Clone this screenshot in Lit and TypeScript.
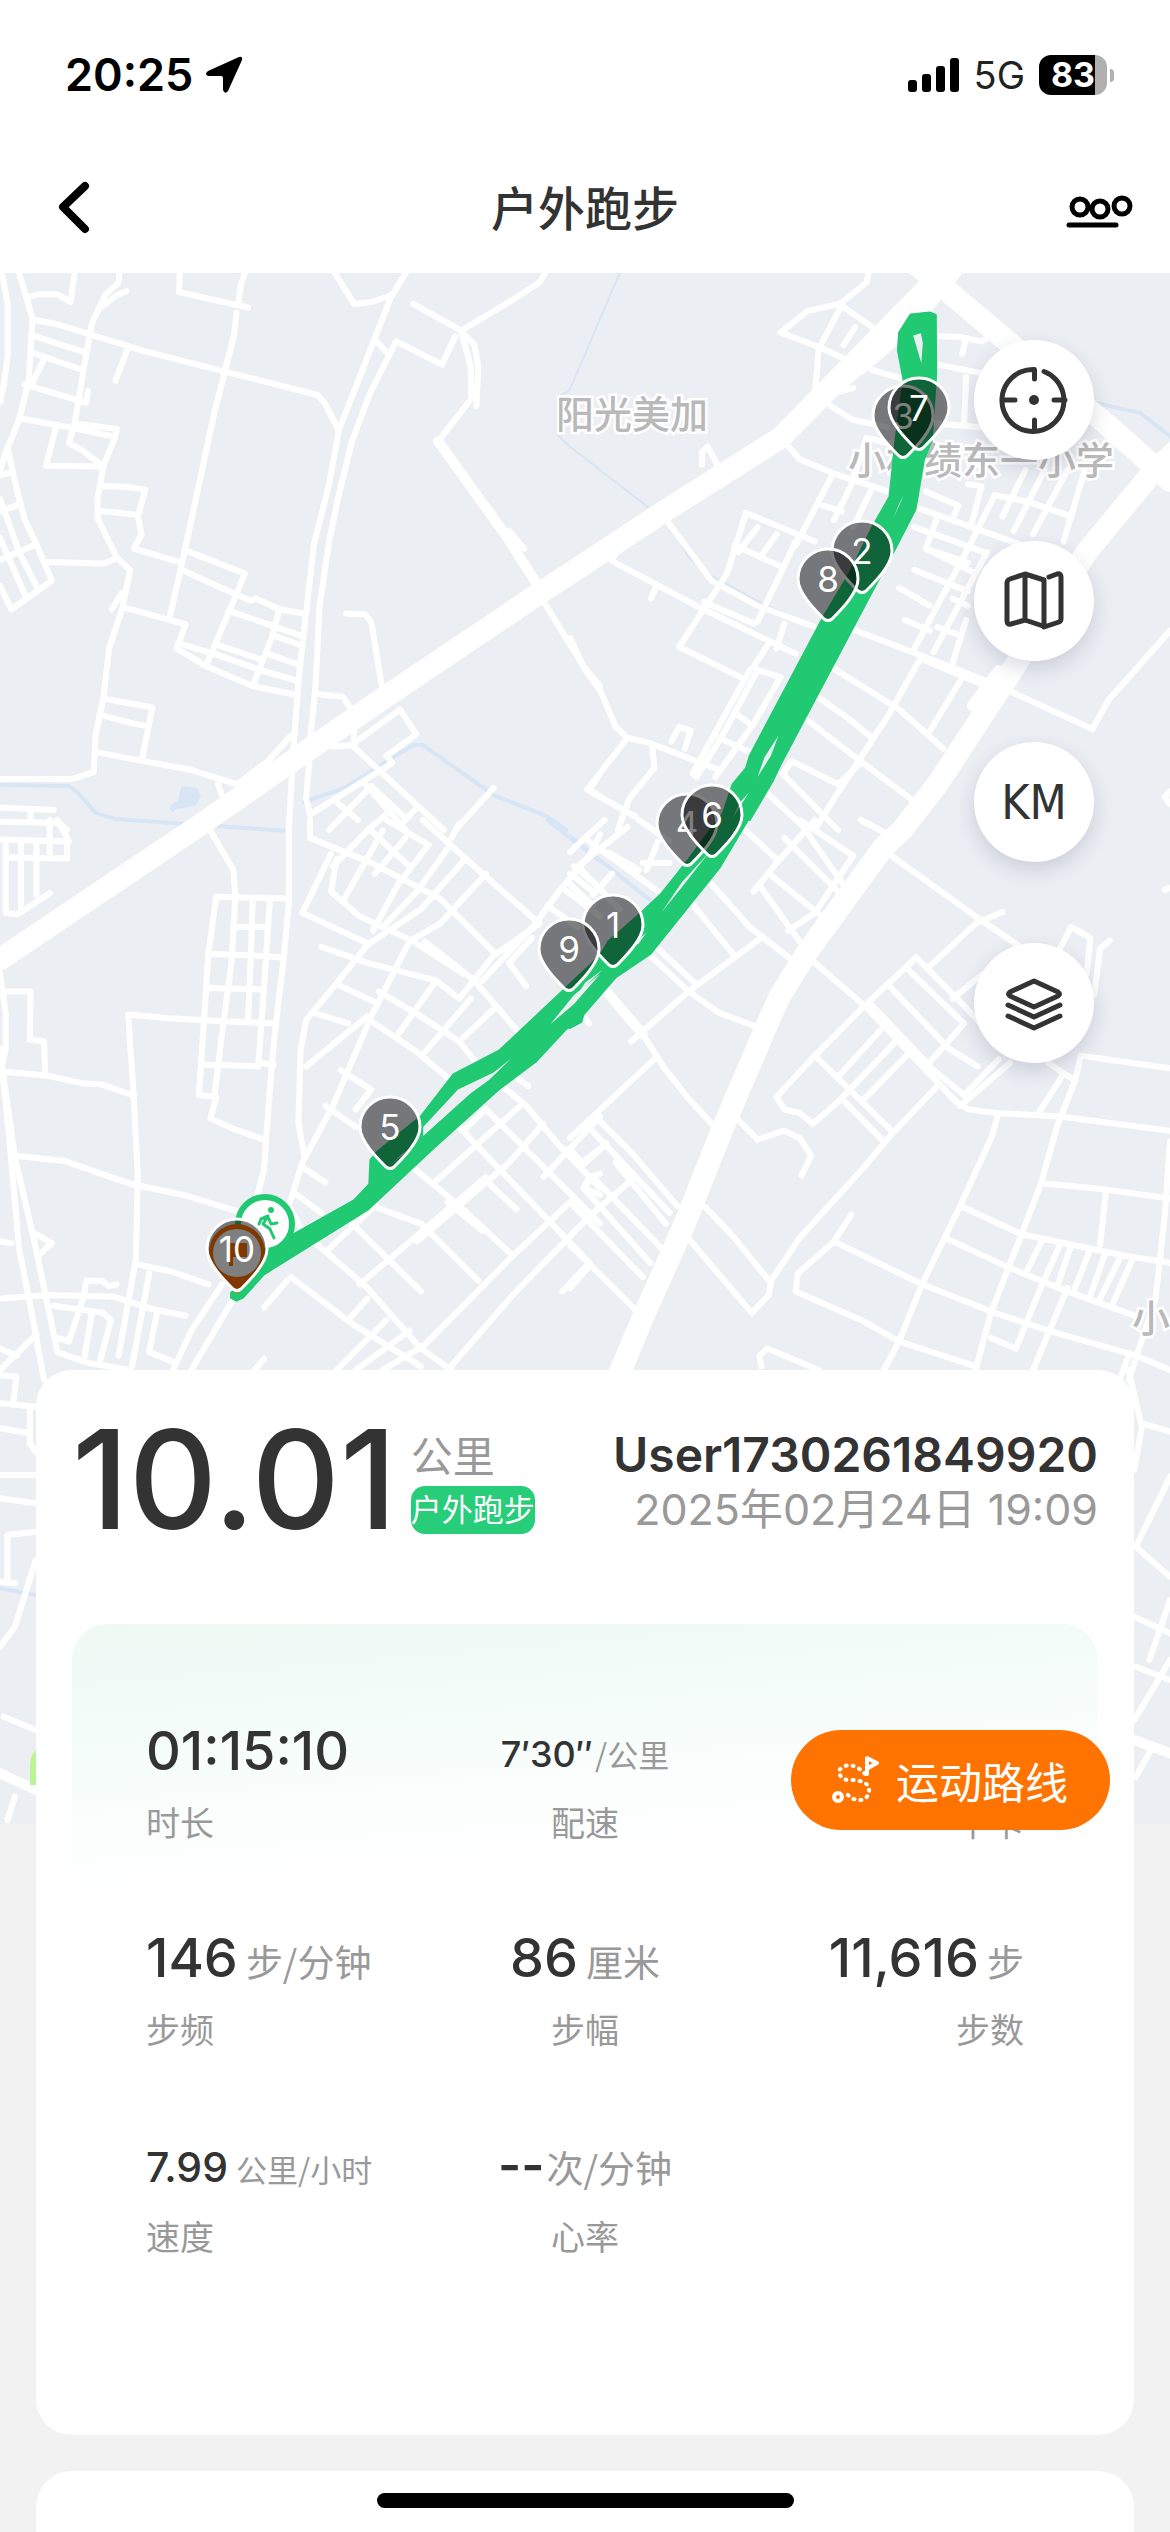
import { LitElement, html, svg, css } from "lit";
import { customElement, property } from "lit/decorators.js";

interface Tile { x: number; y: number; sx: number; sy: number }

// Map tiles: origin on the map canvas and units per pixel on each axis.
const A: Tile = { x: 0, y: 270, sx: 2.6133, sy: 2.8 };
const B: Tile = { x: 570, y: 270, sx: 2.6133, sy: 2.8 };
const C: Tile = { x: 0, y: 820, sx: 2.6133, sy: 2.8 };
const D: Tile = { x: 570, y: 820, sx: 2.6133, sy: 2.8 };
const E: Tile = { x: 0, y: 1360, sx: 1.34, sy: 3 };
const F: Tile = { x: 0, y: 1600, sx: 1.34, sy: 3 };

const project = (t: Tile, pts: string): string =>
  pts.trim().split(/\s+/).map((p) => {
    const [x, y] = p.split(",").map(Number);
    return `${(t.x + x / t.sx).toFixed(1)},${(t.y + y / t.sy).toFixed(1)}`;
  }).join(" ");

const lines = (t: Tile, data: string): string[] =>
  data.split(";").map((s) => s.trim()).filter(Boolean).map((s) => project(t, s));

const streets: string[] = [
  ...lines(A, `5,8 20,95 20,240 10,320 0,370; 50,8 85,135 75,310 50,420 15,510 0,560;
    75,75 100,68 150,68 185,90 195,8; 312,8 310,35 275,70 240,150 235,180 215,300 205,370 195,430 180,485 215,505 270,550;
    330,60 305,70 265,105; 90,140 150,152 235,180 370,225 590,285 830,350 850,375 885,450; 90,185 220,230; 80,230 215,280;
    115,250 85,315 65,320; 65,320 225,372 230,340; 335,215 302,310; 50,415 180,440 290,465;
    195,430 305,445 300,470 270,550 120,548 145,445;
    270,550 255,640 255,695 305,805 340,840 320,945 285,1060 270,1200 250,1300 245,1405 190,1425 0,1425;
    265,605 330,607 380,615 360,690 370,740 350,780 475,820; 260,675 355,685; 120,818 270,822 300,810; 318,905 292,950;
    470,8 468,62 648,105; 640,8 630,40 622,95; 618,120 612,180 560,400 480,800 445,965; 485,785 640,850 540,1105;
    475,840 600,900 655,925 670,920 730,950 795,962; 600,955 790,1025; 730,950 710,1030 660,1165; 720,1025 785,1050;
    700,1075 780,1105; 325,945 485,992 462,1060 540,1110 660,1165 775,1190; 465,1045 560,1075 680,1120 775,1150;
    565,1048 680,1090; 270,1200 398,1225 370,1375; 260,1245 350,1270 375,1275; 250,1350 400,1380 500,1400 620,1440 700,1375 760,1305;
    1060,8 1020,80 885,450 860,600 820,770 800,960 780,1150 765,1370 755,1568;
    875,8 925,95 970,90 1025,70; 985,200 1010,230;
    810,1320 825,1160 835,940 860,760 885,630 920,480 965,350 1035,200 1155,265 1190,185;
    1080,95 1205,170 1330,90 1410,35 1425,8; 1205,170 1240,210 1250,270 1245,380; 1205,170 1230,270 1232,360 1145,480;
    1330,730 1370,780; 905,962 955,965 970,985 1000,1180; 835,1188 895,1195 925,1240;
    1045,1230 1088,1300 1010,1360 1025,1380 810,1525 800,1480 808,1380; 870,1335 920,1330 990,1400 1160,1568;
    955,1440 1060,1568; 880,1490 935,1540; 860,1568 970,1445; 960,1568 1020,1515; 1290,1450 1190,1568; 1050,1550 1085,1510;
    1040,1235 925,1325 925,1280; 570,1440 580,1470; 1568,1410 1540,1455 1568,1475;
    0,1505 140,1512; 0,1545 155,1548 175,1568; 80,1510 80,1545;
    20,500 45,620 65,700 100,780 135,870 30,950 0,885; 0,575 35,565; 0,675 55,655; 0,640 50,790 100,895; 0,750 65,910; 0,812 95,768;
    1410,910 1525,1110 1568,1165; 975,1450 1055,1530`),
  ...lines(B, `780,8 775,35 705,95 620,115 550,175 650,215 730,255; 710,100 790,160 850,205; 710,100 650,220 640,350;
    745,160 715,210; 790,175 755,230; 955,185 1020,188 1075,200 1100,185; 1035,190 1025,235; 790,280 870,305;
    960,265 1130,300; 1035,300 1030,430; 955,430 1130,445; 560,480 600,530 690,570 830,620; 685,575 590,770; 745,580 690,700;
    680,380 740,420 830,440; 775,470 740,580; 775,470 850,490; 660,660 710,675; 790,610 740,720;
    245,690 370,870 490,940 640,1000; 700,990 920,1080 1110,1160 1365,1285 1410,1200 1440,1165 1568,1010;
    460,680 640,760; 460,680 410,850 285,1055 445,1140; 490,720 440,790; 540,740 500,800; 590,760 490,985; 430,770 550,830;
    350,930 480,990; 120,790 110,815 330,940 590,1075; 225,885 212,920; 345,545 345,510 360,495 385,545;
    0,1030 40,1120 80,1180 120,1280 150,1310 45,1455 170,1530; 150,1310 210,1325 390,1400; 215,1330 220,1395 155,1480 125,1568;
    265,1320 285,1280 315,1290 300,1340; 550,1140 490,1120 400,1300 330,1420; 550,1140 480,1270 380,1420; 430,1240 470,1270;
    390,1310 470,1350; 470,1120 320,1410; 520,1045 480,1110; 560,990 540,1060; 680,1110 740,1150 860,1230 975,1340;
    640,1190 720,1250 790,1310; 620,1260 740,1360 890,1480; 920,1080 830,1250 690,1480 640,1568; 920,1090 1100,1170; 1020,1150 935,1300;
    930,620 1015,660 1000,695; 905,665 1050,720 1180,770; 1040,600 1075,605 1050,710; 1110,630 1050,760 900,1060;
    1110,630 1200,650 1310,690; 1190,560 1130,690; 1240,560 1160,730; 1300,560 1210,740; 1345,560 1290,760; 960,690 930,780 1040,820;
    900,720 980,750 1080,790; 930,780 1060,850; 900,840 1040,900; 860,890 940,940; 875,980 940,1010; 1090,790 950,1070;
    1035,980 1000,1100; 555,1410 580,1375 700,1440 760,1380; 555,1410 700,1568; 500,1450 620,1568; 1568,1460 1555,1475 1568,1495;
    640,360 740,330; 960,1000 1010,1020; 1000,920 1040,940`),
  ...lines(C, `550,30 610,140 615,215; 755,0 755,230 740,400 720,580 710,690 695,900 690,980 670,1060;
    750,220 565,215 545,370 520,770 560,775 580,600 605,400 615,220; 610,300 700,300; 660,225 655,400 648,560; 705,225 690,470 675,690;
    545,375 640,378 740,385; 545,470 690,475; 720,570 560,562 440,555 335,545 350,780 360,1000 355,1230 310,1500; 530,685 675,690; 680,680 715,685;
    565,775 550,835 610,865 690,895; 0,430 15,540 15,640 5,690 40,950 90,1180 150,1490 230,1520 340,1540;
    0,640 25,900 50,1200 90,1420 115,1568; 10,480 80,480 78,615 115,620 118,705; 10,705 120,715 220,738 265,740 345,770;
    40,940 170,955 345,1020 480,1050 620,1095; 0,1180 30,1185; 95,1160 135,1185 105,1215; 0,1340 130,1330 300,1335 400,1370 485,1388;
    360,1245 450,1265 545,1300; 390,1270 345,1530; 305,1300 285,1305 265,1290 225,1290 220,1330 180,1460 150,1450;
    140,1360 270,1380 290,1400 260,1520; 240,1380 220,1510; 410,1380 390,1490 460,1520; 0,1540 95,1440; 0,1480 45,1500;
    580,1300 500,1430 440,1568; 605,1350 500,1540; 0,55 180,60 150,0; 15,65 15,260 45,265 130,205; 15,105 175,108 175,60;
    55,65 55,255; 95,65 95,210; 130,65 130,105; 130,0 130,60; 810,0 810,50 970,120 1150,220 1290,370;
    865,95 790,260 960,345; 1105,0 1240,130 1410,290; 1200,10 1180,50; 1010,0 1120,70 1040,180 975,310;
    880,110 865,200 940,270 1080,340 1210,430; 1000,30 900,220; 960,30 870,130; 1060,50 980,150; 970,30 1070,130;
    1270,150 1150,290 1070,340 970,550 870,800 790,960 755,1080 800,1170; 1215,110 1100,250 960,350 870,470 800,560 785,650 780,850 795,940;
    840,355 960,400 1140,450 1200,500 1290,380 1410,290; 1110,340 1240,450 1360,600; 880,460 980,510; 965,560 1090,650 1190,740;
    990,480 1100,550 1200,620; 820,540 910,570; 800,690 960,550; 1140,450 1040,600; 1230,500 1110,650; 1290,530 1210,610;
    1170,80 1090,200 1000,300; 1390,330 1330,400 1375,465; 1568,40 1540,100 1460,200 1400,290 1260,450; 1500,130 1568,190; 1470,190 1568,270;
    1430,240 1510,300; 1200,620 1260,700 1375,800 1460,910 1568,1030; 890,700 970,755 930,810; 850,800 930,860; 795,975 850,1015;
    770,1045 840,1100; 1070,965 1200,1080 1340,1220 1100,1480; 1380,745 1310,690; 1200,860 1540,1240 1470,1320; 1270,810 1568,1130;
    1360,800 1140,1010; 1420,850 1330,960 1090,1180; 1270,810 1210,870; 1270,1010 1350,1090; 1170,1070 1260,1150; 1490,1070 1340,1220;
    1270,1000 940,1300; 980,1080 860,1200; 970,1080 1100,1130 1250,1290; 920,1130 1100,1320; 820,1180 960,1310 1100,1480 1180,1540;
    760,1280 920,1410 1100,1530; 750,1290 690,1365; 960,1340 910,1400; 1010,1400 880,1540; 1070,1430 930,1540; 1110,1470 1000,1540; 690,1510 665,1540;
    1568,830 1420,1000; 1568,1050 1525,1030 1540,1000 1568,990; 1170,1540 1340,1330 1540,1110; 1460,910 1520,960 1568,920`),
  ...lines(D, `840,100 1060,270 1170,350; 1130,258 1060,290 940,410; 760,0 830,40; 450,20 540,110; 640,0 540,120 480,200; 600,0 740,100 640,260 570,310;
    520,150 670,280; 500,190 620,370; 610,20 720,190; 560,50 700,200; 370,180 470,300 590,400; 300,210 430,380;
    500,330 310,480 160,620; 180,350 310,480 390,540 490,580; 210,340 330,460; 190,600 250,700 310,780 370,850;
    440,840 490,895 560,870 600,890 630,940 605,995; 220,670 0,890; 65,830 160,930 280,1080; 45,855 260,1100;
    95,905 35,965 0,920; 0,1070 190,1280; 60,1000 35,1030 210,1240; 60,1000 240,1200; 170,1000 50,1110; 120,960 250,1130;
    0,1190 170,1370; 50,1250 0,1310; 355,1085 430,1170 520,1290; 300,1160 475,1380 520,1330 525,1290 600,1170 770,970 840,880 960,745;
    640,400 770,520 1010,790 1040,810 1110,820 1280,830 1568,870; 905,385 770,520 640,660 540,775 560,810 600,820 635,850 700,790 860,610;
    905,385 1030,520 1090,590; 830,460 990,640 1065,690; 880,415 1030,570 930,690; 790,520 950,700 1030,770; 640,660 840,870;
    710,780 820,900; 700,720 810,590; 770,780 880,660; 1000,500 1080,430; 1280,360 1310,300 1360,330 1350,430; 1410,338 1385,360 1370,490;
    1150,680 1020,800; 1120,670 1030,770; 1250,680 1320,730 1335,660 1568,695; 1320,730 1275,850 1230,1020 1180,1160 1100,1380 1060,1540; 1290,710 1225,820;
    1118,825 1105,880 1020,1080 920,1300 860,1460 820,1540; 1240,1018 1400,1035 1568,1060; 1400,1045 1385,1190;
    1020,1080 1180,1160 1450,1220 1568,1240; 980,1170 1140,1250 1300,1320 1480,1390; 690,1180 920,1300 1110,1380 1250,1430 1480,1500 1568,1540;
    735,1105 690,1180 595,1270 590,1320 770,1405 860,1460 1060,1530; 500,1530 495,1500 515,1480 650,1540; 1235,1175 1195,1260;
    1280,1190 1230,1310 1165,1480 1100,1450; 1310,1190 1275,1300; 1360,1200 1320,1310; 1400,1210 1360,1330; 1440,1220 1385,1340;
    1470,1230 1420,1350; 1568,900 1555,1100 1530,1340 1460,1568; 1300,1310 1210,1540; 1568,190 1555,195; 150,20 20,130; 90,0 0,90;
    50,60 230,200; 100,90 180,140; 0,150 60,200; 110,150 60,210; 230,60 200,140; 180,0 260,60; 20,130 130,250; 0,180 60,240; 30,540 50,570; 260,120 190,120`),
  ...lines(E, `0,45 22,50 18,125; 0,130 48,140; 40,150 40,250 48,275; 0,205 40,220; 0,345 48,345; 0,415 48,430; 10,660 10,525 48,515; 48,600 20,800 0,860; 0,665 20,670;
    1500,60 1512,-10; 1512,30 1530,200 1520,330; 1530,190 1568,215; 1568,350 1522,560 1568,650; 1520,770 1568,820; 1568,720 1540,900`),
  ...lines(F, `5,350 48,390; 10,660 20,590; 1568,240 1522,200; 1568,180 1520,360; 1545,440 1522,530`),
];

const avenues = [
  ...lines(A, "1145,480 1320,740 1410,890"),
  ...lines(B, "1010,8 900,150 640,385; 940,100 880,170 760,280; 1120,1120 1050,1220"),
  ...lines(D, "95,480 190,600"),
  ...lines(F, "0,520 48,570; 1520,420 1568,460"),
];

const highways = [
  project(C, "0,390 525,12") + " " + project(A, "770,1370 1000,1200 1410,905") + " " + project(B, "0,850 240,680 550,470 940,45 990,-10"),
  project(B, "900,-20 1160,215 1400,430 1568,590"),
  project(B, "1600,490 1520,570 1350,790 1150,1130 960,1440 868,1568") +
    " " + project(D, "820,75 620,370 550,490 520,560 400,860 300,1130 200,1370 125,1560"),
];

const streams = [
  ...lines(A, `0,1442 180,1445 205,1465 250,1520 300,1537 470,1550 740,1570; 795,1490 900,1450 1080,1330 1105,1330 1290,1470 1430,1530 1480,1568`),
  ...lines(B, "1365,370 1490,400 1568,465; 270,720 310,800 370,860 490,930 640,1005"),
  ...lines(C, "1430,0 1568,115"),
  ...lines(D, "0,45 210,225"),
  ...lines(E, "0,685 48,705"),
];
const creeks = lines(B, "130,8 0,335 -35,360 -35,460 0,495 205,665");

const routeEdge = [
  project(B, "890,125 940,119 956,126 957,290 945,480 925,530 903,670 850,780 790,900 550,1385 530,1430 470,1540"),
  project(D, "465,0 390,135 210,375 120,440 35,545 30,565 0,582"),
  project(C, "1525,545 1518,565 1480,585 1400,677 1300,757 1130,922 960,1092 690,1272 635,1337 618,1346 604,1338 604,1325 700,1200 925,1065 965,1020 968,952 985,930 1100,830 1185,712 1305,645 1568,380"),
  project(D, "100,340 185,260 240,205 310,110 400,-20"),
  project(B, "425,1440 460,1395 470,1360 660,975 730,850 790,720 835,635 850,480 872,310 857,225 860,175 890,125"),
].join(" ");

const routeGaps = [
  ...lines(B, "897,183 917,177 922,205 918,260; 872,632 860,655 845,695; 545,1303 525,1360 490,1420 508,1365; 468,1463 445,1500 425,1535 445,1490"),
  ...lines(C, "1106,860 1197,755 1290,707 1336,668 1278,728 1230,765 1106,885; 1568,432 1500,515 1438,572 1500,490; 1065,925 1050,935 1020,968"),
  ...lines(D, "362,92 300,178 240,258 292,175; 85,420 40,455 0,520 0,505; 200,315 180,345 140,375"),
];

// Kilometre pins in paint order, placed by their tips.
const pins = [
  { n: 1, x: 613, y: 967 }, { n: 2, x: 862, y: 593 }, { n: 3, x: 903, y: 458 },
  { n: 4, x: 687, y: 866 }, { n: 5, x: 390, y: 1169 }, { n: 6, x: 712, y: 857 },
  { n: 7, x: 919, y: 450 }, { n: 8, x: 828, y: 621 }, { n: 9, x: 569, y: 991 },
  { n: 10, x: 237, y: 1291 },
];
const pinShape = "M-4 -2C-13 -11 -30 -28 -30 -42A30 30 0 0 1 30 -42C30 -28 13 -11 4 -2Q0 1 -4 -2Z";

@customElement("route-map")
class RouteMap extends LitElement {
  static styles = css`
    :host { display: block; background: #ebeff4; }
    svg { display: block; width: 100%; }
    polyline { fill: none; stroke: #fff; stroke-linecap: round; stroke-linejoin: round; }
    .street { stroke-width: 6px; }
    .avenue { stroke-width: 10px; }
    .highway { stroke-width: 22px; }
    .stream { stroke: #d7e5f5; stroke-width: 4px; }
    .creek { stroke: #d7e5f5; stroke-width: 2px; }
    .pond { fill: #d7e5f5; }
    .park { fill: #b9f595; }
    .place { font: 500 38px "Noto Sans CJK SC", sans-serif; fill: #b9b9b9; stroke: #fff; stroke-width: 5px; paint-order: stroke; }
    .route { fill: #20c972; stroke: #20c972; stroke-width: 2px; stroke-linejoin: round; }
    .gap { fill: #ebeff4; }
    .pin { fill: rgba(0, 0, 0, 0.5); stroke: #fff; stroke-width: 3px; }
    .number { font: 400 35px Inter, sans-serif; fill: #fff; text-anchor: middle; }
    .start { fill: #fff; stroke: #20c972; stroke-width: 6px; }
    .runner { fill: none; stroke: #20c972; stroke-width: 3px; stroke-linecap: round; stroke-linejoin: round; }
    .runner-head { fill: #20c972; }
    .finish { fill: #ff7200; }
    .finish-disc { fill: #fff; }
  `;
  render() {
    const draw = (list: string[], cls: string) =>
      list.map((p) => svg`<polyline class=${cls} points=${p}></polyline>`);
    return html`
      <svg viewBox="0 273 1170 1551" role="img" aria-label="跑步路线地图">
        ${draw(creeks, "creek")} ${draw(streams, "stream")}
        <polygon class="pond" points=${project(A, "475,1445 515,1450 525,1475 510,1500 460,1510 452,1518 443,1510 450,1495 465,1485")}></polygon>
        ${draw(streets, "street")} ${draw(avenues, "avenue")} ${draw(highways, "highway")}
        <path class="park" d="M40 1748Q30 1752 30 1766V1785H40Z"></path>
        <text class="place" x="556" y="428">阳光美加</text>
        <text class="place" x="848" y="474">小村绩东一小学</text>
        <text class="place" x="1132" y="1332">小</text>
        <polygon class="route" points=${routeEdge}></polygon>
        ${routeGaps.map((p) => svg`<polygon class="gap" points=${p}></polygon>`)}
        <g transform="translate(265 1224)">
          <circle class="start" r="27"></circle>
          <circle class="runner-head" cx="6" cy="-14" r="3"></circle>
          <path class="runner" d="M-6 0L-4 -5L3 -8L-2 0L5 5L9 14M3 -7L6 0L12 -1"></path>
        </g>
        <g transform="translate(237 1294)">
          <path class="finish" d="M0 0C-10 -10 -28 -26 -28 -42A28 28 0 0 1 28 -42C28 -26 10 -10 0 0Z"></path>
          <circle class="finish-disc" cy="-41" r="24"></circle>
          <path class="finish" d="M-8 -51H10V-37H-4V-28H-8Z"></path>
        </g>
        ${pins.map((p) => svg`<g transform="translate(${p.x} ${p.y})">
          <path class="pin" d=${pinShape}></path>
          <text class="number" y="-29">${p.n}</text>
        </g>`)}
      </svg>`;
  }
}

@customElement("stat-item")
class StatItem extends LitElement {
  @property() value = "";
  @property() unit = "";
  @property() label = "";
  @property() size = "large";
  @property() align = "start";
  static styles = css`
    :host { display: block; white-space: nowrap; }
    .stat { display: flex; flex-direction: column; gap: 17px; margin: 0; }
    .start { align-items: flex-start; }
    .center { align-items: center; }
    .end { align-items: flex-end; }
    .row { display: flex; align-items: center; height: 60px; margin: 0; }
    .line { line-height: 60px; }
    .value { color: #333; font-weight: 500; }
    .unit { color: #999; font-family: "Noto Sans CJK SC", sans-serif; font-weight: 400; margin-left: 8px; }
    .large .value { font-size: 54px; }
    .large .unit, .dash .unit { font-size: 37px; }
    .medium .value { font-size: 41px; }
    .medium .unit { font-size: 31px; }
    .small .value { font-size: 36px; }
    .small .unit { font-size: 31px; }
    .small .unit, .dash .unit { margin-left: 2px; }
    .dash .value { font-size: 50px; font-weight: 600; }
    .label { color: #999; font-size: 34px; line-height: 40px; }
  `;
  render() {
    return html`<dl class="stat ${this.align}">
      <dd class="row ${this.size}"><span class="line"><span class="value">${this.value}</span>${this.unit ? html`<span class="unit">${this.unit}</span>` : ""}</span></dd>
      <dt class="label">${this.label}</dt>
    </dl>`;
  }
}

const stats = [
  { value: "01:15:10", unit: "", label: "时长", size: "large", align: "start" },
  { value: "7′30″", unit: "/公里", label: "配速", size: "small", align: "center" },
  { value: "", unit: "", label: "千卡", size: "large", align: "end" },
  { value: "146", unit: "步/分钟", label: "步频", size: "large", align: "start" },
  { value: "86", unit: "厘米", label: "步幅", size: "large", align: "center" },
  { value: "11,616", unit: "步", label: "步数", size: "large", align: "end" },
  { value: "7.99", unit: "公里/小时", label: "速度", size: "medium", align: "start" },
  { value: "--", unit: "次/分钟", label: "心率", size: "dash", align: "center" },
];

@customElement("app-root")
class AppRoot extends LitElement {
  static styles = css`
    :host { display: block; font-family: Inter, "Noto Sans CJK SC", sans-serif; color: #333; }
    * { box-sizing: border-box; }
    button { border: 0; padding: 0; margin: 0; background: none; font: inherit; color: inherit; cursor: pointer; }
    .page { position: relative; display: flex; flex-direction: column; min-height: 100vh; background: #f2f2f2; overflow: hidden; }
    .top { background: #fff; }
    .status { display: flex; align-items: center; justify-content: space-between; padding: 45px 56px 39px 65px; line-height: 60px; color: #000; }
    .status-side { display: flex; align-items: center; }
    .time { font-size: 45px; font-weight: 600; }
    .arrow { width: 38px; height: 38px; margin-left: 12px; }
    .signal { width: 52px; height: 36px; margin-right: 14px; }
    .network { font-size: 38px; margin-right: 14px; color: #222; }
    .battery { display: flex; align-items: center; gap: 3px; }
    .cell { display: grid; place-items: center; width: 68px; height: 40px; border-radius: 12px; background: linear-gradient(90deg, #000 83%, #b0b0b0 83%); color: #fff; font-size: 34px; font-weight: 700; line-height: 40px; }
    .nub { width: 4px; height: 13px; border-radius: 0 4px 4px 0; background: #b0b0b0; }
    .nav { display: grid; grid-template-columns: 1fr auto 1fr; align-items: center; height: 129px; padding: 0 34px; }
    .nav svg { display: block; }
    .back { width: 60px; height: 60px; padding-left: 20px; }
    .back svg { width: 40px; height: 60px; }
    .more { width: 72px; height: 40px; justify-self: end; }
    .title { margin: 0; font-size: 47px; line-height: 60px; font-weight: 500; }
    .map { position: relative; }
    .controls { position: absolute; top: 67px; right: 76px; display: flex; flex-direction: column; gap: 81px; }
    .control { display: grid; place-items: center; width: 120px; height: 120px; border-radius: 50%; background: #fff; box-shadow: 0 8px 20px rgba(40, 40, 70, 0.16); }
    .control svg { width: 72px; height: 72px; }
    .km { font-family: "DejaVu Sans Condensed", "DejaVu Sans", sans-serif; font-size: 48px; color: #333; }
    .card { position: relative; margin: 0 36px; background: #fff; border-radius: 36px; }
    .summary { margin-top: -454px; padding: 42px 36px 177px; }
    .head { display: flex; justify-content: space-between; align-items: center; }
    .distance { display: flex; align-items: center; gap: 14px; }
    .number { font-size: 137px; line-height: 134px; font-weight: 500; }
    .aside { display: flex; flex-direction: column; align-items: flex-start; padding-top: 6px; line-height: 54px; }
    .unit { font-size: 42px; color: #999; }
    .tag { margin-top: 2px; border-radius: 14px; background: #27cd79; color: #fff; font-size: 31px; line-height: 48px; }
    .who { align-items: flex-end; }
    .user { font-size: 48px; font-weight: 600; }
    .date { font-size: 43px; font-weight: 400; color: #999; }
    .panel { margin-top: 78px; padding: 103px 74px 0; border-radius: 36px 36px 0 0; background: linear-gradient(175deg, #eef9f4, #f4fcf9 120px, #fff 271px) no-repeat top / 100% 271px; }
    .stats { display: grid; grid-template-columns: repeat(3, minmax(0, 1fr)); row-gap: 90px; }
    .next { flex: 1; min-height: 61px; margin-top: 36px; border-radius: 36px 36px 0 0; }
    .route { position: absolute; right: 60px; bottom: 702px; display: flex; align-items: center; gap: 15px; height: 100px; padding: 0 42px 0 40px; border-radius: 50px; background: #ff7300; color: #fff; font-size: 43px; }
    .route svg { width: 50px; height: 52px; }
    .home { position: absolute; left: 0; right: 0; bottom: 24px; width: 417px; height: 15px; margin: 0 auto; border-radius: 8px; background: #000; }
    .ink { fill: none; stroke: #333; stroke-width: 5px; stroke-linecap: round; stroke-linejoin: round; }
    .dot { fill: #333; }
    .black { fill: none; stroke: #000; stroke-width: 5px; stroke-linecap: round; }
    .chevron { fill: none; stroke: #000; stroke-width: 8px; stroke-linecap: round; stroke-linejoin: round; }
    .light { fill: none; stroke: #fff; stroke-width: 4px; stroke-linecap: round; stroke-linejoin: round; }
    .dots { stroke-dasharray: 1 6; }
  `;
  render() {
    return html`
      <div class="page">
        <header class="top">
          <div class="status">
            <div class="status-side">
              <span class="time">20:25</span>
              <svg class="arrow" viewBox="0 0 38 38"><path d="M34 1L3 15Q-1 18 3 20H16Q18 20 18 22V34Q20 39 23 35L37 4Q38 0 34 1Z"/></svg>
            </div>
            <div class="status-side">
              <svg class="signal" viewBox="0 0 52 36"><rect y="23" width="9" height="12" rx="3"/><rect x="14" y="17" width="9" height="18" rx="3"/><rect x="28" y="9" width="9" height="26" rx="3"/><rect x="42" y="1" width="9" height="34" rx="3"/></svg>
              <span class="network">5G</span>
              <span class="battery"><span class="cell">83</span><span class="nub"></span></span>
            </div>
          </div>
          <nav class="nav">
            <button class="back" aria-label="返回"><svg viewBox="0 0 40 60"><path class="chevron" d="M31 7L9 28L31 50"/></svg></button>
            <h1 class="title">户外跑步</h1>
            <button class="more" aria-label="更多"><svg viewBox="0 0 72 40">
              <circle class="black" cx="16" cy="18" r="8"/><circle class="black" cx="36" cy="20" r="8"/><circle class="black" cx="58" cy="17" r="8"/><path class="black" d="M5 36H52"/>
            </svg></button>
          </nav>
        </header>
        <section class="map">
          <route-map></route-map>
          <div class="controls">
            <button class="control" aria-label="定位"><svg viewBox="0 0 72 72"><path class="ink" d="M46 7.500A31 31 0 1 1 36.500 5.500V15M36.500 67V56M5 36H17M67 36H56"/><circle class="dot" cx="36" cy="36" r="5"/></svg></button>
            <button class="control" aria-label="地图"><svg viewBox="0 0 72 72"><path class="ink" d="M45 61L27 55L13 59Q9 60 9 56V18Q9 15 12 14L27 9L46 15V62L61 57Q63 56 63 54V12Q63 8 59 9L51 12M27 9V55"/></svg></button>
            <button class="control km">KM</button>
            <button class="control" aria-label="图层"><svg viewBox="0 0 72 72"><path class="ink" d="M36 14L60 25Q63 27 60 29L36 40L12 29Q9 27 12 25ZM10 38L36 50L62 38M10 49L36 61L62 49"/></svg></button>
          </div>
        </section>
        <section class="card summary">
          <div class="head">
            <div class="distance">
              <span class="number">10.01</span>
              <div class="aside"><span class="unit">公里</span><span class="tag">户外跑步</span></div>
            </div>
            <div class="aside who"><span class="user">User1730261849920</span><time class="date">2025年02月24日 19:09</time></div>
          </div>
          <div class="panel"><div class="stats">
            ${stats.map((s) => html`<stat-item .value=${s.value} .unit=${s.unit} .label=${s.label} .size=${s.size} .align=${s.align}></stat-item>`)}
          </div></div>
        </section>
        <section class="card next"></section>
        <button class="route">
          <svg viewBox="0 0 50 52"><path class="light" d="M36 20V4L46 9L37 14"/><path class="light dots" d="M34 20Q24 9 14 12Q6 15 9 21Q12 27 22 26Q36 27 38 34Q39 43 31 46Q22 47 16 40"/><circle class="light" cx="7" cy="43" r="4"/></svg>
          运动路线
        </button>
        <div class="home"></div>
      </div>`;
  }
}
